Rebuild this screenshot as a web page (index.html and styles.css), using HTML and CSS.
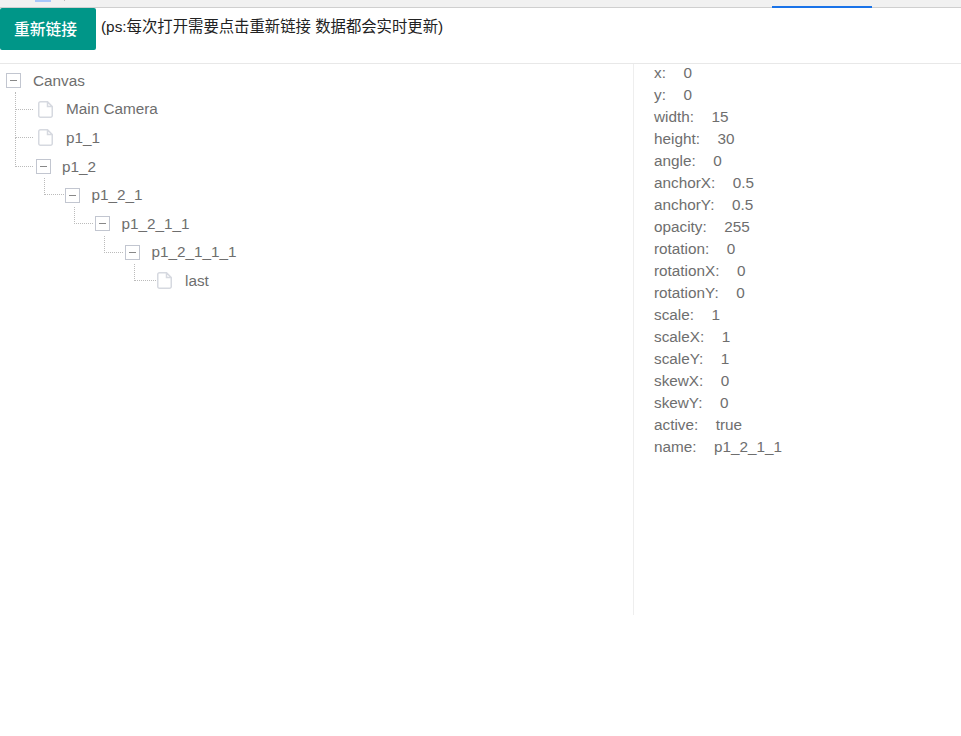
FILE: index.html
```html
<!DOCTYPE html>
<html lang="zh">
<head>
<meta charset="utf-8">
<title>Inspector</title>
<link rel="stylesheet" href="styles.css">
</head>
<body>
<div class="browser-bar">
  <span class="tab-icon"></span>
  <span class="tab-sep"></span>
  <span class="tab-active"></span>
</div>
<header class="toolbar">
  <button class="btn">重新链接</button>
  <span class="hint">(ps:每次打开需要点击重新链接 数据都会实时更新)</span>
</header>
<main class="main">
  <section class="tree">
    <div class="node n0"><span class="box"></span><span class="label l-root">Canvas</span></div>
    <div class="node n1 leaf"><i class="conn"></i><svg class="file" viewBox="0 0 15 17"><path d="M2.500 .75H9.500L14.250 5.500V14.500a1.750 1.750 0 0 1-1.750 1.750H2.500a1.750 1.750 0 0 1-1.750-1.750V2.500A1.750 1.750 0 0 1 2.500 .75z M9.500 .75V5.500H14.250"/></svg><span class="label l-file">Main Camera</span></div>
    <div class="node n1 leaf"><i class="conn"></i><svg class="file" viewBox="0 0 15 17"><path d="M2.500 .75H9.500L14.250 5.500V14.500a1.750 1.750 0 0 1-1.750 1.750H2.500a1.750 1.750 0 0 1-1.750-1.750V2.500A1.750 1.750 0 0 1 2.500 .75z M9.500 .75V5.500H14.250"/></svg><span class="label l-file">p1_1</span></div>
    <div class="node n1 branch"><i class="conn"></i><span class="box"></span><span class="label">p1_2</span></div>
    <div class="node n2 branch"><i class="conn"></i><span class="box"></span><span class="label">p1_2_1</span></div>
    <div class="node n3 branch"><i class="conn"></i><span class="box"></span><span class="label">p1_2_1_1</span></div>
    <div class="node n4 branch"><i class="conn"></i><span class="box"></span><span class="label">p1_2_1_1_1</span></div>
    <div class="node n5 leaf"><i class="conn"></i><svg class="file" viewBox="0 0 15 17"><path d="M2.500 .75H9.500L14.250 5.500V14.500a1.750 1.750 0 0 1-1.750 1.750H2.500a1.750 1.750 0 0 1-1.750-1.750V2.500A1.750 1.750 0 0 1 2.500 .75z M9.500 .75V5.500H14.250"/></svg><span class="label l-file">last</span></div>
  </section>
  <aside class="props">
    <div class="prop"><span>x:</span><span>0</span></div>
    <div class="prop"><span>y:</span><span>0</span></div>
    <div class="prop"><span>width:</span><span>15</span></div>
    <div class="prop"><span>height:</span><span>30</span></div>
    <div class="prop"><span>angle:</span><span>0</span></div>
    <div class="prop"><span>anchorX:</span><span>0.5</span></div>
    <div class="prop"><span>anchorY:</span><span>0.5</span></div>
    <div class="prop"><span>opacity:</span><span>255</span></div>
    <div class="prop"><span>rotation:</span><span>0</span></div>
    <div class="prop"><span>rotationX:</span><span>0</span></div>
    <div class="prop"><span>rotationY:</span><span>0</span></div>
    <div class="prop"><span>scale:</span><span>1</span></div>
    <div class="prop"><span>scaleX:</span><span>1</span></div>
    <div class="prop"><span>scaleY:</span><span>1</span></div>
    <div class="prop"><span>skewX:</span><span>0</span></div>
    <div class="prop"><span>skewY:</span><span>0</span></div>
    <div class="prop"><span>active:</span><span>true</span></div>
    <div class="prop"><span>name:</span><span>p1_2_1_1</span></div>
  </aside>
</main>
</body>
</html>
```
FILE: styles.css
```css
* { box-sizing: border-box; }
html, body { margin: 0; padding: 0; background: #fff; }
body { font-family: "Liberation Sans", "Noto Sans CJK SC", sans-serif; font-size: 15.300px; color: #6e6e6e; overflow: hidden; height: 736px; }

.browser-bar { height: 8px; background: #f1f1f1; border-bottom: 1px solid #cfcfcf; position: relative; }
.tab-icon { position: absolute; left: 35px; top: 0; width: 16px; height: 2px; background: #a8c7fa; }
.tab-sep { position: absolute; left: 64px; top: 0; width: 1px; height: 1px; background: #bbb; }
.tab-active { position: absolute; left: 772px; bottom: -1px; width: 100px; height: 2px; background: #1a73e8; }

.toolbar { height: 56px; display: flex; align-items: flex-start; border-bottom: 1px solid #e8e8e8; }
.btn { width: 96px; height: 42px; border: 0; border-radius: 2px; background: #009688; color: #fff; font: 500 15.750px "Liberation Sans", "Noto Sans CJK SC", sans-serif; padding: 0 5px 2px 0; }
.hint { margin-left: 5px; line-height: 38px; color: #222; font-size: 15.360px; white-space: nowrap; }

.main { display: flex; height: 551px; }
.tree { width: 634px; border-right: 1px solid #eee; padding-top: 2.500px; }
.props { padding: 0 0 0 20px; flex: 1; }
.prop { height: 22px; line-height: 17px; display: flex; gap: 17.500px; white-space: nowrap; }

.node { height: 28.600px; position: relative; display: flex; align-items: center; white-space: nowrap; }
.n0 { padding-left: 6px; }
.n1 { padding-left: 38px; }
.n2 { padding-left: 65px; }
.n3 { padding-left: 95px; }
.n4 { padding-left: 125px; }
.n5 { padding-left: 157px; }
.n1.branch { padding-left: 36px; }
.box { width: 15px; height: 15px; border: 1px solid #c2c6d0; background: #fff; position: relative; flex: none; }
.box::after { content: ""; position: absolute; left: 3px; right: 3px; top: 6px; height: 1px; background: #888; }
.label { margin-left: 11px; }
.n2 .label, .n3 .label, .n4 .label { margin-left: 11.500px; }
.n0 .l-root { margin-left: 12px; }
.n1 .l-file, .n5 .l-file { margin-left: 13px; }
.file { width: 15px; height: 17px; flex: none; fill: none; stroke: #d6d9e0; stroke-width: 1.500; }
.conn { position: absolute; border-left: 1px dotted #bbb; border-bottom: 1px dotted #bbb; height: 17px; bottom: 14px; width: 20px; }
.n1 .conn { left: 15px; width: 18px; }
.n2 .conn { left: 44px; }
.n3 .conn { left: 74px; width: 19px; }
.n4 .conn { left: 104px; width: 19px; }
.n5 .conn { left: 134px; width: 22px; }
.n1:nth-child(2) .conn { height: 18px; }
.n1:nth-child(3) .conn, .n1:nth-child(4) .conn { height: 29px; }
```
